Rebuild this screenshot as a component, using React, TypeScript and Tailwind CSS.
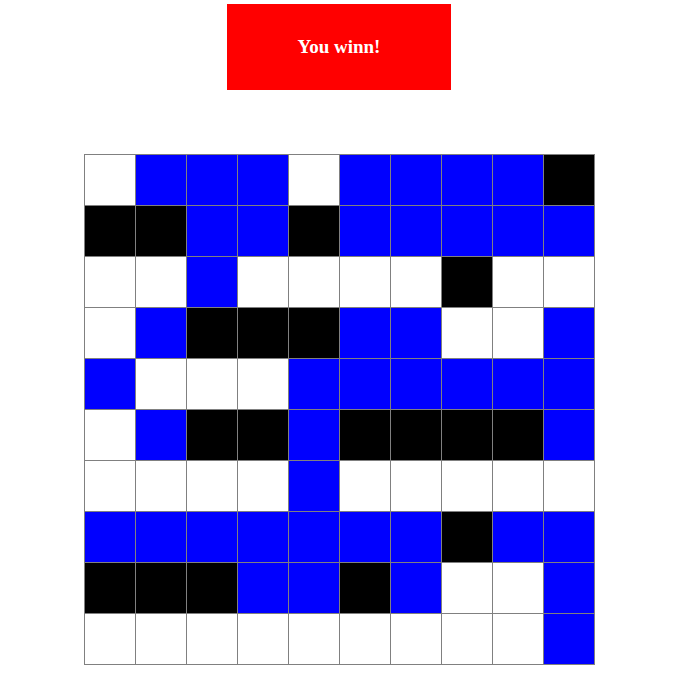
import React from 'react';

// W = white, B = blue, K = black
const BOARD = [
  'WBBBWBBBBK',
  'KKBBKBBBBB',
  'WWBWWWWKWW',
  'WBKKKBBWWB',
  'BWWWBBBBBB',
  'WBKKBKKKKB',
  'WWWWBWWWWW',
  'BBBBBBBKBB',
  'KKKBBKBWWB',
  'WWWWWWWWWB',
];

const cellColors: Record<string, string> = {
  W: 'bg-white',
  B: 'bg-[#0000ff]',
  K: 'bg-black',
};

export default function App() {
  return (
    <div className="w-[679px] h-[679px] bg-white flex flex-col items-center pt-[4px] font-['Liberation_Serif',serif]">
      {/* Status banner */}
      <div className="w-[224px] h-[86px] mr-px bg-[#ff0000] flex items-center justify-center">
        <span className="text-white font-bold text-[19px]">You winn!</span>
      </div>

      {/* Board */}
      <div className="mt-[64px] grid grid-cols-10 gap-px p-px bg-[#808080]">
        {BOARD.flatMap((row, r) =>
          row.split('').map((c, i) => (
            <div key={`${r}-${i}`} className={`w-[50px] h-[50px] ${cellColors[c]}`} />
          ))
        )}
      </div>
    </div>
  );
}
